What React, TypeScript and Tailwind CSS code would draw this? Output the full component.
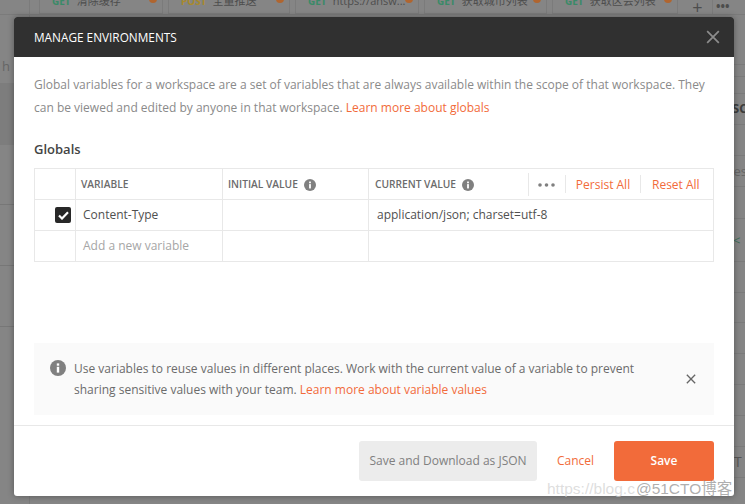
const FONT = "font-['Open_Sans',sans-serif]";

function Info({ size = 12 }: { size?: number }) {
  return (
    <svg width={size} height={size} viewBox="0 0 16 16" className="shrink-0">
      <circle cx="8" cy="8" r="8" fill="#808080" />
      <rect x="6.8" y="6.8" width="2.4" height="5.8" fill="#fff" />
      <rect x="6.8" y="3.4" width="2.4" height="2.3" fill="#fff" />
    </svg>
  );
}

function X({ size, color, stroke }: { size: number; color: string; stroke: number }) {
  return (
    <svg width={size} height={size} viewBox="0 0 12 12">
      <path d="M1 1 L11 11 M11 1 L1 11" stroke={color} strokeWidth={stroke} fill="none" />
    </svg>
  );
}

const tabs = [
  { m: "GET", t: "清除缓存", c: "text-[#3a8a68]", w: "w-[124px]" },
  { m: "POST", t: "全量推送", c: "text-[#a88a2c]", w: "w-[122px]" },
  { m: "GET", t: "https://answ...", c: "text-[#3a8a68]", w: "w-[124px]" },
  { m: "GET", t: "获取城市列表", c: "text-[#3a8a68]", w: "w-[123px]" },
  { m: "GET", t: "获取区会列表", c: "text-[#3a8a68]", w: "w-[126px]" },
];

const rightRows: { h: string; node?: React.ReactNode }[] = [
  { h: "h-[50px]" },
  { h: "h-[12px]" },
  { h: "h-[17px]" },
  { h: "h-[31px]", node: <span className="pl-[1px] text-[12.5px] font-bold text-[#3d3d3d]">DESCRIPTION</span> },
  { h: "h-[31px]" },
  { h: "h-[31px]", node: <span className="pl-[9px] text-[13px] text-[#666]">Description</span> },
  { h: "h-[32px]" },
  { h: "h-[43px]", node: <span className="pl-[18px] text-[13px] text-[#3d6e58]">{"<"}</span> },
  { h: "h-[31px]" },
  { h: "h-[30px]" },
  { h: "h-[31px]" },
  { h: "h-[31px]" },
  { h: "h-[31px]" },
  { h: "h-[31px]" },
  { h: "h-[31px]", node: <span className="pl-[19px] text-[14px] text-[#555]">T</span> },
];

function Background() {
  return (
    <div className="flex h-full flex-col">
      <div className="flex h-[15px] shrink-0 items-end overflow-hidden border-b border-[#7b7b7b]">
        <div className="mr-[9px] h-[15px] w-[30px] shrink-0 border-r border-[#7b7b7b]" />
        {tabs.map((tab, i) => (
          <div
            key={i}
            className={`relative mr-[5px] flex h-[30px] shrink-0 items-start gap-[6px] border-x border-b border-[#7b7b7b] pl-[12px] pt-[11px] font-['Open_Sans','Noto_Sans_CJK_SC',sans-serif] text-[11px] leading-[12px] ${tab.w}`}
          >
            <span className={`text-[10px] font-bold ${tab.c}`}>{tab.m}</span>
            <span className="whitespace-nowrap text-[#4d4d4d]">{tab.t}</span>
            <span className="absolute right-[5px] top-[11px] h-[8px] w-[8px] rounded-full bg-[#b0652f]" />
          </div>
        ))}
        <div className="flex h-[15px] w-[30px] items-center justify-center border-r border-[#7b7b7b] text-[18px] leading-none text-[#4d4d4d]">+</div>
        <div className="ml-[3px] flex h-[15px] items-center text-[12px] font-bold text-[#4d4d4d]">•••</div>
      </div>
      <div className="flex flex-1 justify-between">
        <div className="flex w-[30px] flex-col border-r border-[#7b7b7b]">
          <div className="h-[68px] pl-[2px] pt-[44px] text-[13px] leading-[14px] text-[#666]">h</div>
          <div className="h-[62px] bg-[#7d7d7d]" />
          <div className="h-[60px] border-b border-[#777]" />
          <div className="h-[61px] border-b border-[#777]" />
          <div className="h-[61px] border-b border-[#777]" />
        </div>
        <div className="flex w-[30px] flex-col">
          {rightRows.map((r, i) => (
            <div key={i} className={`flex shrink-0 items-center overflow-hidden whitespace-nowrap border-b border-[#7b7b7b] leading-[16px] ${r.h}`}>
              {r.node}
            </div>
          ))}
        </div>
      </div>
    </div>
  );
}

function HeaderCell({ children, className = "" }: { children: React.ReactNode; className?: string }) {
  return (
    <div className={`flex items-center gap-[6px] border-r border-[#e8e8e8] pl-[5px] pt-[2px] text-[10.2px] font-semibold text-[#6b6b6b] ${className}`}>
      {children}
    </div>
  );
}

export default function App() {
  return (
    <div className={`relative h-[504px] w-[745px] overflow-hidden bg-[#858585] ${FONT}`}>
      <Background />

      <div className="absolute left-[14px] top-[17px] flex h-[479px] w-[720px] flex-col overflow-hidden rounded-[3px] bg-white shadow-[0_0_6px_rgba(0,0,0,0.35)]">
        <div className="flex h-10 shrink-0 items-center justify-between bg-[#303030] pl-5 pr-[14px]">
          <span className="pt-[1px] text-[11.8px] font-medium text-white">MANAGE ENVIRONMENTS</span>
          <X size={14} color="#8c8c8c" stroke={1.5} />
        </div>

        <div className="flex flex-1 flex-col px-5">
          <p className="mt-4 whitespace-nowrap text-[12px] leading-[23px] text-[#8a8a8a]">
            Global variables for a workspace are a set of variables that are always available within the scope of that workspace. They
            <br />
            can be viewed and edited by anyone in that workspace.{" "}
            <span className="text-[#f26b3a]">Learn more about globals</span>
          </p>

          <h2 className="mt-[21px] text-[13px] font-semibold leading-[18px] text-[#444]">Globals</h2>

          <div className="mt-[10px] w-[680px] border border-[#e8e8e8] text-[12px] text-[#505050]">
            <div className="flex h-[31px] border-b border-[#e8e8e8]">
              <div className="w-[41px] shrink-0 border-r border-[#e8e8e8]" />
              <HeaderCell className="w-[147px] shrink-0">VARIABLE</HeaderCell>
              <HeaderCell className="w-[146px] shrink-0">
                INITIAL VALUE <Info />
              </HeaderCell>
              <div className="flex flex-1 items-center pl-[6px] text-[10.2px] font-semibold text-[#6b6b6b]">
                <span className="flex w-[153px] items-center gap-[6px] pt-[2px]">
                  CURRENT VALUE <Info />
                </span>
                <span className="flex h-[23px] w-[37px] items-center justify-center border-l border-[#e8e8e8] pr-[1px] pt-[2px]">
                  <svg width="17" height="4" viewBox="0 0 17 4">
                    <circle cx="2" cy="2" r="1.8" fill="#808080" />
                    <circle cx="8.5" cy="2" r="1.8" fill="#808080" />
                    <circle cx="15" cy="2" r="1.8" fill="#808080" />
                  </svg>
                </span>
                <span className="flex h-[18px] w-[75px] items-center justify-center border-l border-[#e8e8e8] pt-[2px] text-[12px] font-normal text-[#f26b3a]">
                  Persist All
                </span>
                <span className="flex h-[18px] flex-1 items-center border-l border-[#e8e8e8] pl-[11px] pt-[2px] text-[12px] font-normal text-[#f26b3a]">
                  Reset All
                </span>
              </div>
            </div>

            <div className="flex h-[31px] border-b border-[#e8e8e8]">
              <div className="flex w-[41px] shrink-0 items-center justify-end border-r border-[#e8e8e8] pr-[4px]">
                <span className="flex h-[16px] w-[16px] items-center justify-center rounded-[2px] bg-[#282828]">
                  <svg width="11" height="9" viewBox="0 0 11 9">
                    <path d="M1 4.5 L4 7.5 L10 1.2" stroke="#fff" strokeWidth="2.2" fill="none" />
                  </svg>
                </span>
              </div>
              <div className="flex w-[147px] shrink-0 items-center border-r border-[#e8e8e8] pl-[7px]">Content-Type</div>
              <div className="w-[146px] shrink-0 border-r border-[#e8e8e8]" />
              <div className="flex flex-1 items-center pl-[8px]">application/json; charset=utf-8</div>
            </div>

            <div className="flex h-[30px]">
              <div className="w-[41px] shrink-0 border-r border-[#e8e8e8]" />
              <div className="flex w-[147px] shrink-0 items-center border-r border-[#e8e8e8] pl-[7px] text-[#a6a6a6]">Add a new variable</div>
              <div className="w-[146px] shrink-0 border-r border-[#e8e8e8]" />
              <div className="flex-1" />
            </div>
          </div>

          <div className="mt-[81px] flex h-[72px] w-[680px] items-center bg-[#fafafa] pl-4 pr-[18px]">
            <div className="mb-[22px] mr-2">
              <Info size={16} />
            </div>
            <p className="flex-1 text-[12px] leading-[21px] text-[#6b6b6b]">
              Use variables to reuse values in different places. Work with the current value of a variable to prevent
              <br />
              sharing sensitive values with your team. <span className="text-[#f26b3a]">Learn more about variable values</span>
            </p>
            <X size={10} color="#666" stroke={1.6} />
          </div>
        </div>

        <div className="flex h-[71px] shrink-0 items-start justify-end border-t border-[#e8e8e8] pr-5 pt-[15px]">
          <div className="flex h-10 w-[178px] items-center justify-center rounded-[3px] bg-[#ececec] text-[12px] text-[#808080]">
            Save and Download as JSON
          </div>
          <div className="flex h-10 w-[77px] items-center justify-center text-[12px] text-[#f26b3a]">Cancel</div>
          <div className="flex h-10 w-[100px] items-center justify-center rounded-[3px] bg-[#f26b3a] text-[12px] font-semibold text-white">
            Save
          </div>
        </div>
      </div>

      <div className="absolute left-[547px] top-[477px] flex items-baseline whitespace-nowrap font-['Liberation_Sans',sans-serif] text-[15.5px]">
        <span className="text-[#cfcfcf]/70">https://blog.c</span>
        <span className="ml-[1px] font-['Liberation_Sans','Noto_Sans_CJK_SC',sans-serif] text-[#8c8c8c]/70">@51CTO博客</span>
      </div>
    </div>
  );
}
